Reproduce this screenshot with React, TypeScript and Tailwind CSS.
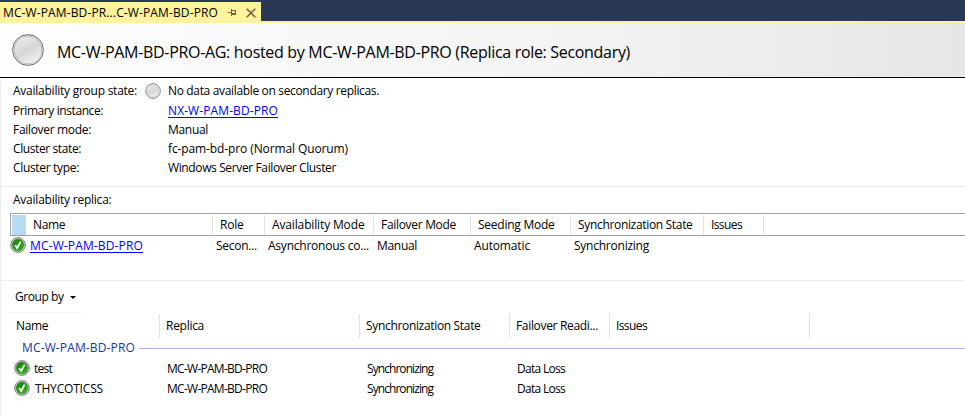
import { useLayoutEffect, useRef } from "react";

/** Single-line label whose tracking is adjusted so the text fills `w` pixels. */
function Label({ text, w, className = "" }: { text: string; w: number; className?: string }) {
  const ref = useRef<HTMLSpanElement>(null);
  useLayoutEffect(() => {
    const el = ref.current;
    if (!el) return;
    el.style.letterSpacing = "0px";
    const natural = el.getBoundingClientRect().width;
    el.style.letterSpacing = `${(w - natural) / text.length}px`;
  }, [text, w]);
  return (
    <span ref={ref} className={`inline-block shrink-0 whitespace-pre ${className}`}>
      {text}
    </span>
  );
}

function GrayOrb({ size }: { size: number }) {
  const id = `orb${size}`;
  const big = size > 20;
  return (
    <svg width={size} height={size} viewBox={`0 0 ${size} ${size}`} className="block shrink-0">
      <defs>
        <linearGradient id={id} x1="0.25" y1="0" x2="0.75" y2="1">
          <stop offset="0" stopColor="#ececec" />
          <stop offset="0.5" stopColor="#d6d6d6" />
          <stop offset="1" stopColor="#f4f4f4" />
        </linearGradient>
      </defs>
      <circle cx={size / 2} cy={size / 2} r={size / 2 - 0.6} fill="#f4f4f4" stroke={big ? "#6a6a6a" : "#8c8c8c"} strokeWidth="1" />
      <circle cx={size / 2} cy={size / 2} r={size / 2 - 2} fill={`url(#${id})`} stroke={big ? "#b0b0b0" : "#c4c4c4"} strokeWidth="0.8" />
    </svg>
  );
}

function CheckOrb() {
  return (
    <svg width="16" height="16" viewBox="0 0 16 16" className="block shrink-0">
      <defs>
        <linearGradient id="green" x1="0" y1="0" x2="0.6" y2="1">
          <stop offset="0" stopColor="#157a0c" />
          <stop offset="1" stopColor="#2fae18" />
        </linearGradient>
      </defs>
      <circle cx="8" cy="8" r="7.4" fill="#c8c8c8" stroke="#858585" strokeWidth="1" />
      <circle cx="8" cy="8" r="5.9" fill="url(#green)" stroke="#4a7d44" strokeWidth="0.4" />
      <path d="M5.1 8.2 7.2 11 10.6 4.6" fill="none" stroke="#fff" strokeWidth="1.8" />
    </svg>
  );
}

type Cell = [text: string, w: number];

const details: { label: Cell; value: Cell; link?: boolean; height: string }[] = [
  { label: ["Primary instance:", 90], value: ["NX-W-PAM-BD-PRO", 110], link: true, height: "h-5" },
  { label: ["Failover mode:", 78], value: ["Manual", 40], height: "h-[18px]" },
  { label: ["Cluster state:", 68], value: ["fc-pam-bd-pro (Normal Quorum)", 180], height: "h-5" },
  { label: ["Cluster type:", 66], value: ["Windows Server Failover Cluster", 168], height: "h-[18px]" },
];

const replicaHead: [string, number, string][] = [
  ["Role", 23.5, "w-[52px]"],
  ["Availability Mode", 92.5, "w-[109px]"],
  ["Failover Mode", 75, "w-[97px]"],
  ["Seeding Mode", 76.5, "w-[100px]"],
  ["Synchronization State", 114.5, "w-[133px]"],
  ["Issues", 31, "w-[60px]"],
];

const replicaRow: [string, number, string][] = [
  ["Secon...", 41, "w-[52px]"],
  ["Asynchronous co...", 101, "w-[109px]"],
  ["Manual", 40, "w-[97px]"],
  ["Automatic", 56, "w-[100px]"],
  ["Synchronizing", 75, "w-[133px]"],
];

const databaseHead: [string, number, string][] = [
  ["Name", 32, "w-[150px]"],
  ["Replica", 38, "w-[200px]"],
  ["Synchronization State", 114.5, "w-[150px]"],
  ["Failover Readi...", 82, "w-[100px]"],
  ["Issues", 31, "w-[200px]"],
];

const databases: { name: Cell; indent: string }[] = [
  { name: ["test", 18], indent: "pl-1" },
  { name: ["THYCOTICSS", 68], indent: "pl-[5px]" },
];

export default function App() {
  return (
    <div className="flex h-[416px] w-[965px] flex-col overflow-hidden bg-white font-['Open_Sans','Noto_Sans',sans-serif] text-xs leading-4 text-black">
      <div className="h-[23px] shrink-0 border-b-2 border-[#fff29d] bg-[#293955] pt-0.5">
        <div className="flex h-[19px] w-[261px] items-center bg-[#fff29d] pl-[3px]">
          <Label text="MC-W-PAM-BD-PR...C-W-PAM-BD-PRO" w={215} className="relative top-px" />
          <svg width="9" height="9" viewBox="0 0 9 9" className="ml-2.5 mt-0.5" fill="none" stroke="#75633d" shapeRendering="crispEdges">
            <path d="M0 4.5H3M3.5 1V8M3 2.5H8M7.5 2V7M3 5.5H8M3 6.5H8" />
          </svg>
          <svg width="10" height="10" viewBox="0 0 10 10" className="ml-[9px] mt-0.5" fill="none" stroke="#75633d" strokeWidth="1.6">
            <path d="M.7 .7 9.3 9.3M9.3 .7 .7 9.3" />
          </svg>
        </div>
      </div>

      <header className="flex h-[55px] shrink-0 items-center border-b border-black bg-linear-to-r from-[#fefefe] via-[#f3f3f3] via-60% to-[#e6e6e6] pl-3">
        <GrayOrb size={32} />
        <h1 className="ml-[13px] mt-[3px] text-base leading-5">
          <Label text="MC-W-PAM-BD-PRO-AG: hosted by MC-W-PAM-BD-PRO (Replica role: Secondary)" w={573} />
        </h1>
      </header>

      <main className="flex flex-1 flex-col border-l border-[#ececec]">
        <section className="h-[109px] shrink-0 border-b border-[#ececec] pl-3 pt-[3px]">
          <div className="flex h-5 items-center">
            <div className="w-[132px]">
              <Label text="Availability group state:" w={124} />
            </div>
            <GrayOrb size={16} />
            <Label text="No data available on secondary replicas." w={211} className="ml-[7px]" />
          </div>
          {details.map((d) => (
            <div key={d.label[0]} className={`flex items-center ${d.height}`}>
              <div className="w-[155px]">
                <Label text={d.label[0]} w={d.label[1]} />
              </div>
              <Label text={d.value[0]} w={d.value[1]} className={d.link ? "text-[#0000ff] underline underline-offset-2" : ""} />
            </div>
          ))}
        </section>

        <section className="h-[94px] shrink-0 border-b border-[#ececec] pl-[9px] pt-[5px]">
          <div className="h-[21px] pl-[3px]">
            <Label text="Availability replica:" w={98.5} />
          </div>
          <div className="flex h-[23px] border-y border-l border-[#a0a0a0] pt-px">
            <div className="ml-px w-3.5 bg-[#b9daf3]" />
            <div className="w-[187px] border-r border-[#e2e2e2] pl-[7px] pt-0.5">
              <Label text="Name" w={32} />
            </div>
            {replicaHead.map(([text, w, col]) => (
              <div key={text} className={`border-r border-[#e2e2e2] pl-[7px] pt-0.5 ${col}`}>
                <Label text={text} w={w} />
              </div>
            ))}
          </div>
          <div className="flex h-[18px] items-center">
            <CheckOrb />
            <div className="w-[190px] pl-1 pt-0.5">
              <Label text="MC-W-PAM-BD-PRO" w={113} className="text-[#0000ff] underline underline-offset-2" />
            </div>
            {replicaRow.map(([text, w, col]) => (
              <div key={text} className={`pt-0.5 ${col}`}>
                <Label text={text} w={w} />
              </div>
            ))}
          </div>
        </section>

        <section className="pl-[9px]">
          <div className="flex h-8 w-[72px] items-center border-b border-[#f4f4f4] pl-[5px]">
            <Label text="Group by" w={48.5} />
            <svg width="6" height="3" viewBox="0 0 6 3" className="ml-1.5 mt-0.5">
              <path d="M0 0H6L3 3Z" />
            </svg>
          </div>
          <div className="mt-px flex h-6">
            {databaseHead.map(([text, w, col]) => (
              <div key={text} className={`border-r border-[#e2e2e2] pl-1.5 pt-1 ${col}`}>
                <Label text={text} w={w} />
              </div>
            ))}
          </div>
          <div className="flex h-5 items-center pl-3">
            <Label text="MC-W-PAM-BD-PRO" w={113} className="text-[#17389b]" />
            <div className="ml-1 h-px flex-1 bg-[#aabde3]" />
          </div>
          {databases.map(({ name, indent }) => (
            <div key={name[0]} className="flex h-5 items-center pl-1">
              <CheckOrb />
              <div className={`w-[137px] pt-0.5 ${indent}`}>
                <Label text={name[0]} w={name[1]} />
              </div>
              <div className="w-[200px] pt-0.5">
                <Label text="MC-W-PAM-BD-PRO" w={100} />
              </div>
              <div className="w-[150px] pt-0.5">
                <Label text="Synchronizing" w={66} />
              </div>
              <div className="pt-0.5">
                <Label text="Data Loss" w={48} />
              </div>
            </div>
          ))}
        </section>
      </main>
    </div>
  );
}
